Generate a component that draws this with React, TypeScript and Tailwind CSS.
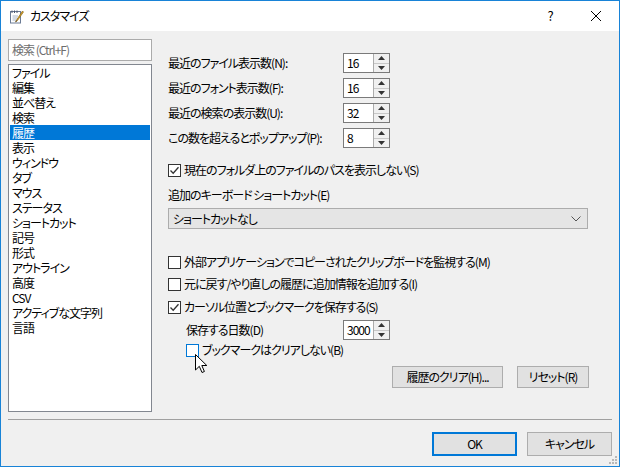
import React from 'react';

const categories = [
  'ファイル', '編集', '並べ替え', '検索', '履歴', '表示', 'ウィンドウ', 'タブ', 'マウス',
  'ステータス', 'ショートカット', '記号', '形式', 'アウトライン', '高度', 'CSV',
  'アクティブな文字列', '言語',
];

const counts = [
  { label: '最近のファイル表示数(N):', value: '16' },
  { label: '最近のフォント表示数(F):', value: '16' },
  { label: '最近の検索の表示数(U):', value: '32' },
  { label: 'この数を超えるとポップアップ(P):', value: '8' },
];

const Checkbox = ({ checked = false, hover = false }: { checked?: boolean; hover?: boolean }) => (
  <span
    className={
      hover
        ? 'w-[13px] h-[13px] shrink-0 border border-[#0078d7] bg-white flex items-center justify-center'
        : 'w-[13px] h-[13px] shrink-0 border border-[#333333] bg-white flex items-center justify-center'
    }
  >
    {checked && (
      <svg width="11" height="11" viewBox="0 0 11 11">
        <path d="M1.5 5.5 L4.2 8.3 L9.5 2.2" fill="none" stroke="#333" strokeWidth="1.3" />
      </svg>
    )}
  </span>
);

const Spinner = ({ value }: { value: string }) => (
  <div className="w-[47px] h-[20px] border border-[#7a7a7a] bg-white flex shrink-0">
    <div className="flex-1 pl-[3px] text-[12px] leading-[18px]">{value}</div>
    <div className="w-[16px] flex flex-col border-l border-[#acacac] bg-[#f0f0f0]">
      <div className="flex-1 flex items-center justify-center border-b border-[#c8c8c8]">
        <svg width="7" height="4" viewBox="0 0 7 4">
          <path d="M0 4 L3.5 0 L7 4 Z" fill="#333" />
        </svg>
      </div>
      <div className="flex-1 flex items-center justify-center">
        <svg width="7" height="4" viewBox="0 0 7 4">
          <path d="M0 0 L3.5 4 L7 0 Z" fill="#333" />
        </svg>
      </div>
    </div>
  </div>
);

const CheckRow = ({ label, checked, hover }: { label: string; checked?: boolean; hover?: boolean }) => (
  <div className="h-[20px] flex items-center gap-[3px]">
    <Checkbox checked={checked} hover={hover} />
    <span>{label}</span>
  </div>
);

const NoteIcon = () => (
  <svg width="15" height="15" viewBox="0 0 15 15">
    <rect x="1.5" y="2.5" width="10" height="11.5" fill="#fff" stroke="#6b7b95" />
    <path d="M3 1.5 V4 M5.5 1.5 V4 M8 1.5 V4" stroke="#4a5670" strokeWidth="1" />
    <path d="M3.5 7 H9 M3.5 9 H8 M3.5 11 H7" stroke="#a8b4c8" strokeWidth="1" />
    <path d="M13.5 2 L7.5 11 L6.5 13 L8.3 11.7 L14.5 3 Z" fill="#e0a526" stroke="#7a5a10" strokeWidth="0.6" />
    <path d="M6.5 13 L7.2 11.5 L8 12 Z" fill="#333" />
  </svg>
);

export default function App() {
  return (
    <div className="relative w-[620px] h-[467px] border border-[#1883d7] bg-[#f0f0f0] flex flex-col text-[12px] tracking-[-1px] text-black font-['Noto_Sans_CJK_JP',sans-serif] [font-feature-settings:'palt'] overflow-hidden">
      {/* title bar */}
      <div className="h-[30px] bg-white flex items-center shrink-0">
        <div className="pl-[8px]">
          <NoteIcon />
        </div>
        <span className="ml-[6px] text-[12px]">カスタマイズ</span>
        <div className="ml-auto flex h-full">
          <div className="w-[46px] flex items-center justify-center text-[13px]">?</div>
          <div className="w-[46px] flex items-center justify-center">
            <svg width="10" height="10" viewBox="0 0 10 10">
              <path d="M0 0 L10 10 M10 0 L0 10" stroke="#000" strokeWidth="1" />
            </svg>
          </div>
        </div>
      </div>

      {/* body */}
      <div className="h-[388px] flex pl-[7px] pt-[8px] shrink-0">
        <div className="w-[144px] flex flex-col">
          <div className="h-[22px] border border-[#ababab] bg-white pl-[3px] text-[#6d6d6d] leading-[20px]">
            検索 (Ctrl+F)
          </div>
          <div className="mt-[3px] h-[348px] border border-[#828790] bg-white px-[1px]">
            {categories.map((c) =>
              c === '履歴' ? (
                <div key={c} className="h-[15px] leading-[15px] pl-[2px] bg-[#0078d7] text-white">
                  {c}
                </div>
              ) : (
                <div key={c} className="h-[15px] leading-[15px] pl-[2px]">
                  {c}
                </div>
              )
            )}
          </div>
        </div>

        <div className="ml-[16px] w-[421px] flex flex-col pt-[14px]">
          <div className="flex flex-col gap-[5px]">
            {counts.map((r) => (
              <div key={r.label} className="h-[20px] flex items-center">
                <span className="w-[175px]">{r.label}</span>
                <Spinner value={r.value} />
              </div>
            ))}
          </div>

          <div className="mt-[12px]">
            <CheckRow label="現在のフォルダ上のファイルのパスを表示しない(S)" checked />
          </div>
          <div className="mt-[5px] h-[20px] flex items-center">追加のキーボード ショートカット(E)</div>
          <div className="mt-[3px] w-[420px] h-[21px] border border-[#acacac] bg-[#e5e5e5] flex items-center pl-[4px] pr-[6px]">
            <span>ショートカットなし</span>
            <svg className="ml-auto" width="10" height="6" viewBox="0 0 10 6">
              <path d="M0.5 0.5 L5 5 L9.5 0.5" fill="none" stroke="#555" strokeWidth="1" />
            </svg>
          </div>

          <div className="mt-[23px]">
            <CheckRow label="外部アプリケーションでコピーされたクリップボードを監視する(M)" />
          </div>
          <div className="mt-[2px]">
            <CheckRow label="元に戻す/やり直しの履歴に追加情報を追加する(I)" />
          </div>
          <div className="mt-[3px]">
            <CheckRow label="カーソル位置とブックマークを保存する(S)" checked />
          </div>
          <div className="mt-[3px] pl-[18px] h-[20px] flex items-center">
            <span className="w-[157px]">保存する日数(D)</span>
            <Spinner value="3000" />
          </div>
          <div className="pl-[18px]">
            <CheckRow label="ブックマークはクリアしない(B)" hover />
          </div>
          <div className="mt-[6px] flex justify-end gap-[14px]">
            <button className="w-[111px] h-[22px] border border-[#adadad] bg-[#e1e1e1]">履歴のクリア(H)...</button>
            <button className="w-[72px] h-[22px] border border-[#adadad] bg-[#e1e1e1]">リセット(R)</button>
          </div>
        </div>
      </div>

      {/* footer */}
      <div className="mx-[7px] border-t border-[#a0a0a0]" />
      <div className="flex justify-end gap-[10px] pr-[7px] pt-[12px]">
        <button className="w-[85px] h-[24px] border-2 border-[#0078d7] bg-[#e1e1e1]">OK</button>
        <button className="w-[85px] h-[24px] border border-[#adadad] bg-[#e1e1e1]">キャンセル</button>
      </div>

      {/* resize grip */}
      <svg className="absolute right-[1px] bottom-[1px]" width="10" height="10" viewBox="0 0 10 10">
        <rect x="7" y="1" width="2" height="2" fill="#b8b8b8" />
        <rect x="4" y="4" width="2" height="2" fill="#b8b8b8" />
        <rect x="7" y="4" width="2" height="2" fill="#b8b8b8" />
        <rect x="1" y="7" width="2" height="2" fill="#b8b8b8" />
        <rect x="4" y="7" width="2" height="2" fill="#b8b8b8" />
        <rect x="7" y="7" width="2" height="2" fill="#b8b8b8" />
      </svg>

      {/* mouse pointer */}
      <svg className="absolute left-[194px] top-[353px]" width="13" height="20" viewBox="0 0 13 20">
        <path d="M0.5 0.5 L0.5 16 L4.3 12.3 L7 18.5 L9.4 17.5 L6.8 11.5 L11.8 11.5 Z" fill="#fff" stroke="#000" strokeWidth="1" />
      </svg>
    </div>
  );
}
